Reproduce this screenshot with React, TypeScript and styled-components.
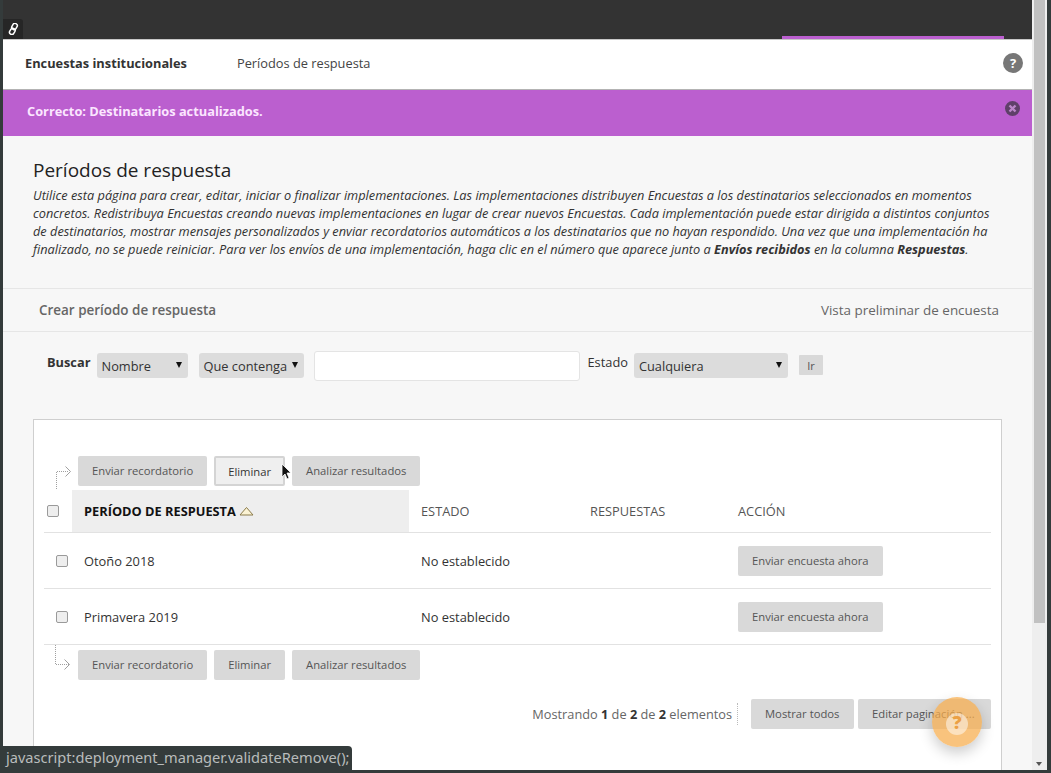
import React from "react";
import styled, { createGlobalStyle } from "styled-components";

const Global = createGlobalStyle`
  html, body { margin: 0; padding: 0; height: 100%; overflow: hidden; }
  body { font-family: "Open Sans", sans-serif; background: #343b3b; }
  * { box-sizing: border-box; }
`;

const Viewport = styled.div`
  position: relative;
  width: 1051px;
  height: 773px;
  overflow: hidden;
  background: #343b3b;
  display: flex;
  padding: 0 4px 3px 3px;
`;
const Frame = styled.div`
  flex: 1;
  min-width: 0;
  display: flex;
  flex-direction: column;
  background: #f7f7f7;
  overflow: hidden;
`;
const TopBar = styled.div`
  position: relative;
  flex: none;
  height: 40px;
  background: #333333;
  border-bottom: 1px solid #c8c8c8;
  display: flex;
  justify-content: flex-end;
  align-items: flex-end;
  padding-right: 28px;
`;
const TabStrip = styled.div`
  width: 222px;
  height: 3px;
  background: #bb5fcf;
`;
const LinkBadge = styled.div`
  position: absolute;
  left: 0;
  top: 19px;
  width: 20px;
  height: 20px;
  background: #262626;
  border-top-right-radius: 3px;
  display: flex;
  align-items: center;
  justify-content: center;
`;
const Tabs = styled.nav`
  flex: none;
  height: 50px;
  background: #fff;
  border-bottom: 1px solid #b3b3b3;
  display: flex;
  align-items: center;
  padding: 0 9px 4px 22px;
  font-size: 12.8px;
  color: #444;
`;
const TabActive = styled.span`
  font-weight: 700;
  color: #333;
  margin-right: 50px;
`;
const TabItem = styled.span`
  flex: 1;
`;
const HelpCircle = styled.span`
  width: 20px;
  height: 20px;
  border-radius: 50%;
  background: #777;
  color: #fff;
  font-weight: 700;
  font-size: 13px;
  display: flex;
  align-items: center;
  justify-content: center;
`;
const Alert = styled.div`
  position: relative;
  flex: none;
  height: 46px;
  background: #bb5fcf;
  color: #fbe6ff;
  font-weight: 700;
  font-size: 12.8px;
  padding: 12px 24px;
  line-height: 18px;
`;
const CloseIcon = styled.svg`
  position: absolute;
  right: 12px;
  top: 11px;
`;
const Intro = styled.section`
  flex: none;
  height: 153px;
  padding: 22px 30px 0;
  border-bottom: 1px solid #e6e6e6;
`;
const Title = styled.h1`
  margin: 0 0 4px;
  font-size: 19px;
  font-weight: 400;
  line-height: 24px;
  color: #222;
`;
const Description = styled.p`
  margin: 0;
  font-size: 12.76px;
  font-style: italic;
  line-height: 18px;
  color: #333;
  white-space: nowrap;
`;
const ActionBar = styled.div`
  flex: none;
  height: 43px;
  border-bottom: 1px solid #e6e6e6;
  display: flex;
  align-items: center;
  justify-content: space-between;
  padding: 0 33px 0 36px;
  font-size: 13.45px;
  color: #666;
`;
const ActionStrong = styled.span`
  font-weight: 600;
`;
const SearchBar = styled.form`
  flex: none;
  height: 87px;
  display: flex;
  align-items: flex-start;
  padding: 19px 0 0 44px;
  font-size: 12.8px;
  color: #333;
`;
const SearchLabel = styled.label<{ $strong?: boolean; $gap: number }>`
  font-weight: ${(p) => (p.$strong ? 700 : 400)};
  margin-right: ${(p) => p.$gap}px;
  margin-top: -1px;
  line-height: 24px;
`;
const SelectBox = styled.div<{ $w: number; $mr: number }>`
  width: ${(p) => p.$w}px;
  margin-right: ${(p) => p.$mr}px;
  margin-top: 2px;
  height: 25px;
  background: #dcdcdc;
  border-radius: 3px;
  display: flex;
  align-items: center;
  justify-content: space-between;
  padding: 0 6px 0 5px;
  color: #333;
`;
const Caret = styled.span`
  width: 0;
  height: 0;
  border-left: 3px solid transparent;
  border-right: 3px solid transparent;
  border-top: 6px solid #111;
  margin-top: -2px;
`;
const TextField = styled.div`
  width: 266px;
  height: 30px;
  background: #fff;
  border: 1px solid #e4e4e4;
  border-radius: 3px;
  margin-right: 8px;
`;
const GoButton = styled.button`
  margin: 4px 0 0 11px;
  width: 24px;
  height: 20px;
  background: #d9d9d9;
  border: none;
  border-radius: 1px;
  padding: 0;
  font: 400 11px "Open Sans", sans-serif;
  color: #555;
`;
const Panel = styled.div`
  flex: 1;
  margin: 0 30px;
  background: #fff;
  border: 1px solid #cfcfcf;
  border-bottom: none;
  padding: 36px 10px 0 0;
  min-height: 0;
`;
const Toolbar = styled.div`
  display: flex;
  align-items: center;
  height: 30px;
  padding-left: 20px;
  gap: 7px;
`;
const Arrow = styled.svg`
  flex: none;
  width: 17px;
  overflow: visible;
`;
const Btn = styled.button<{ $focus?: boolean }>`
  height: 30px;
  padding: ${(p) => (p.$focus ? "0 12px" : "0 14px")};
  background: ${(p) => (p.$focus ? "#efefef" : "#d9d9d9")};
  border: ${(p) => (p.$focus ? "2px solid #d4d4d4" : "none")};
  border-radius: 2px;
  font: 400 11.25px/28px "Open Sans", sans-serif;
  color: ${(p) => (p.$focus ? "#333" : "#555")};
  white-space: nowrap;
`;
const PagerBtn = styled(Btn)<{ $w: number }>`
  width: ${(p) => p.$w}px;
  text-align: left;
`;
const HeadRow = styled.div`
  display: grid;
  align-items: center;
  height: 43px;
  margin: 4px 0 0 10px;
  border-bottom: 1px solid #e2e2e2;
  grid-template-columns: 28px 337px 169px 148px 1fr;
  font-size: 12.8px;
  color: #555;
`;
const SortCell = styled.div`
  height: 42px;
  background: #eeeeee;
  display: flex;
  align-items: center;
  gap: 3px;
  padding-left: 12px;
  font-weight: 700;
  font-size: 12.8px;
  color: #111;
`;
const HeadCell = styled.div`
  padding-left: 12px;
`;
const Row = styled.div`
  display: grid;
  align-items: center;
  height: 56px;
  margin-left: 10px;
  grid-template-columns: 28px 337px 169px 148px 1fr;
  border-bottom: 1px solid #e2e2e2;
  font-size: 12.85px;
  color: #333;
`;
const Check = styled.span<{ $inset?: boolean }>`
  display: block;
  width: 12px;
  height: 12px;
  margin-left: ${(p) => (p.$inset ? 12 : 3)}px;
  background: #eeeeee;
  border: 1px solid #9a9a9a;
  border-radius: 2px;
`;
const Cell = styled.div`
  padding-left: 12px;
`;
const Spacer = styled.div`
  height: 5px;
`;
const Pager = styled.div`
  display: flex;
  justify-content: flex-end;
  align-items: center;
  gap: 4px;
  margin-top: 19px;
  font-size: 12.75px;
  color: #666;
`;
const PagerText = styled.span`
  padding-right: 5px;
  margin-right: 9px;
  border-right: 1px dotted #bbb;
  line-height: 22px;
  b { color: #333; }
`;
const StatusBar = styled.div`
  position: absolute;
  left: 0;
  bottom: 0;
  width: 352px;
  height: 27px;
  background: #343b3b;
  border-top-right-radius: 4px;
  color: #b9bcbc;
  font: 400 14.6px/22px "Noto Sans", sans-serif;
  padding-left: 6px;
  white-space: nowrap;
  overflow: hidden;
`;
const Fab = styled.div`
  position: absolute;
  left: 932px;
  top: 697px;
  width: 50px;
  height: 50px;
  border-radius: 50%;
  background: rgba(247, 172, 75, 0.72);
  box-shadow: 0 6px 14px rgba(0, 0, 0, 0.2);
  display: flex;
  align-items: center;
  justify-content: center;
`;
const FabInner = styled.span`
  width: 22px;
  height: 22px;
  margin-top: 3px;
  border-radius: 50%;
  background: rgba(255, 255, 255, 0.5);
  color: #eba044;
  font-weight: 800;
  font-size: 18px;
  line-height: 18px;
  text-align: center;
`;
const Pointer = styled.svg`
  position: absolute;
  left: 281px;
  top: 463px;
`;
const Scrollbar = styled.div`
  position: relative;
  flex: none;
  width: 15px;
  background: #eeeeee;
  padding-left: 2px;
`;
const Thumb = styled.div`
  height: 623px;
  width: 11px;
  background: #c1c1c1;
`;
const ScrollDown = styled.span`
  position: absolute;
  bottom: 4px;
  left: 4px;
  width: 0;
  height: 0;
  border-left: 3.5px solid transparent;
  border-right: 3.5px solid transparent;
  border-top: 4px solid #555;
`;

const ToolbarRow = ({ bottom, focus }: { bottom?: boolean; focus?: boolean }) => (
  <Toolbar>
    <Arrow height="30" viewBox="0 0 17 30" fill="none" stroke="#a0a0a0" strokeWidth="1">
      {bottom ? (
        <>
          <path d="M1.5 -5V14.5H15" strokeDasharray="1 1" />
          <path d="M10.5 9.5l5 5-5 5" />
        </>
      ) : (
        <>
          <path d="M2.5 33V15.5H15" strokeDasharray="1 1" />
          <path d="M11.5 10.5l5 5-5 5" />
        </>
      )}
    </Arrow>
    <Btn>Enviar recordatorio</Btn>
    <Btn $focus={focus}>Eliminar</Btn>
    <Btn>Analizar resultados</Btn>
  </Toolbar>
);

export default function App() {
  return (
    <Viewport>
      <Global />
      <Frame>
        <TopBar>
          <LinkBadge>
            <svg width="11" height="12" viewBox="0 0 12 13" fill="none" stroke="#fff" strokeWidth="1.6">
              <rect x="4.6" y="0.2" width="5" height="7" rx="2.3" transform="rotate(30 7 3.7)" />
              <rect x="2.2" y="5.6" width="5" height="7" rx="2.3" transform="rotate(30 4.7 9.1)" />
            </svg>
          </LinkBadge>
          <TabStrip />
        </TopBar>
        <Tabs>
          <TabActive>Encuestas institucionales</TabActive>
          <TabItem>Períodos de respuesta</TabItem>
          <HelpCircle>?</HelpCircle>
        </Tabs>
        <Alert>
          Correcto: Destinatarios actualizados.
          <CloseIcon width="15" height="15" viewBox="0 0 15 15">
            <circle cx="7.5" cy="7.5" r="7.5" fill="#5f4069" />
            <path d="M4.5 4.5l6 6M10.5 4.5l-6 6" stroke="#bb86c9" strokeWidth="2.4" />
          </CloseIcon>
        </Alert>
        <Intro>
          <Title>Períodos de respuesta</Title>
          <Description>
            Utilice esta página para crear, editar, iniciar o finalizar implementaciones. Las implementaciones distribuyen Encuestas a los destinatarios seleccionados en momentos
            <br />
            concretos. Redistribuya Encuestas creando nuevas implementaciones en lugar de crear nuevos Encuestas. Cada implementación puede estar dirigida a distintos conjuntos
            <br />
            de destinatarios, mostrar mensajes personalizados y enviar recordatorios automáticos a los destinatarios que no hayan respondido. Una vez que una implementación ha
            <br />
            finalizado, no se puede reiniciar. Para ver los envíos de una implementación, haga clic en el número que aparece junto a <b>Envíos recibidos</b> en la columna <b>Respuestas</b>.
          </Description>
        </Intro>
        <ActionBar>
          <ActionStrong>Crear período de respuesta</ActionStrong>
          <span>Vista preliminar de encuesta</span>
        </ActionBar>
        <SearchBar>
          <SearchLabel $strong $gap={6}>Buscar</SearchLabel>
          <SelectBox $w={91} $mr={11}>Nombre<Caret /></SelectBox>
          <SelectBox $w={105} $mr={10}>Que contenga<Caret /></SelectBox>
          <TextField />
          <SearchLabel $gap={6}>Estado</SearchLabel>
          <SelectBox $w={154} $mr={0}>Cualquiera<Caret /></SelectBox>
          <GoButton type="button">Ir</GoButton>
        </SearchBar>
        <Panel>
          <ToolbarRow focus />
          <HeadRow>
            <Check />
            <SortCell>
              PERÍODO DE RESPUESTA
              <svg width="15" height="10" viewBox="0 0 15 10">
                <path d="M1 9 7.5 1.5 14 9Z" fill="#fbf3d4" stroke="#8a7a4a" strokeWidth="1" />
              </svg>
            </SortCell>
            <HeadCell>ESTADO</HeadCell>
            <HeadCell>RESPUESTAS</HeadCell>
            <HeadCell>ACCIÓN</HeadCell>
          </HeadRow>
          <Row>
            <Check $inset />
            <Cell>Otoño 2018</Cell>
            <Cell>No establecido</Cell>
            <Cell />
            <Cell><Btn>Enviar encuesta ahora</Btn></Cell>
          </Row>
          <Row>
            <Check $inset />
            <Cell>Primavera 2019</Cell>
            <Cell>No establecido</Cell>
            <Cell />
            <Cell><Btn>Enviar encuesta ahora</Btn></Cell>
          </Row>
          <Spacer />
          <ToolbarRow bottom />
          <Pager>
            <PagerText>Mostrando <b>1</b> de <b>2</b> de <b>2</b> elementos</PagerText>
            <PagerBtn $w={103}>Mostrar todos</PagerBtn>
            <PagerBtn $w={133}>Editar paginación ...</PagerBtn>
          </Pager>
        </Panel>
      </Frame>
      <Scrollbar>
        <Thumb />
        <ScrollDown />
      </Scrollbar>
      <Fab><FabInner>?</FabInner></Fab>
      <Pointer width="12" height="18" viewBox="0 0 12 18">
        <path d="M1 1v13l3-3 2 5 2-1-2-5h4Z" fill="#111" stroke="#fff" strokeWidth="0.8" />
      </Pointer>
      <StatusBar>javascript:deployment_manager.validateRemove();</StatusBar>
    </Viewport>
  );
}
